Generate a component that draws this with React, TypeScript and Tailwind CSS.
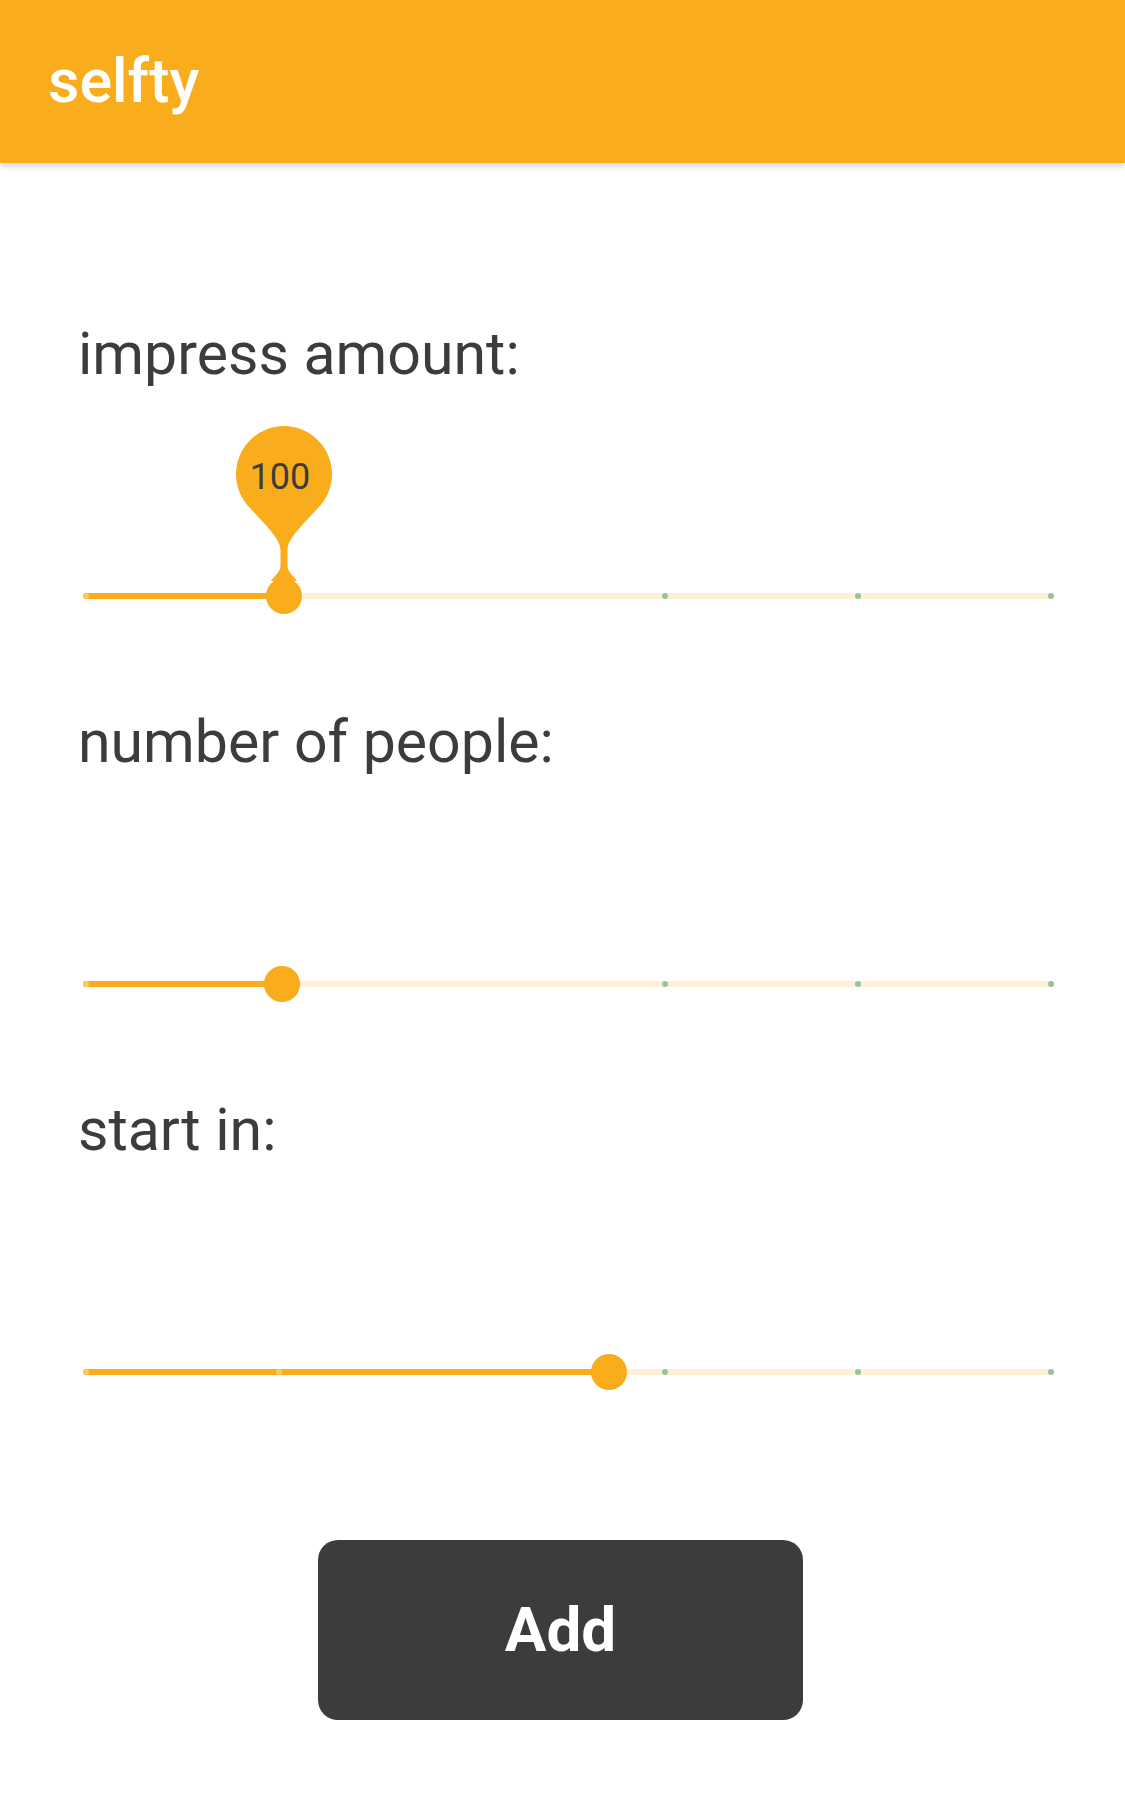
import React from "react";

const TICKS = [3, 196, 389, 582, 775, 968];

type SliderProps = { value: number; bubble?: string; hideTicks?: number[] };

function Slider({ value, bubble, hideTicks = [2] }: SliderProps) {
  return (
    <div className="relative h-[120px] ml-[5px] w-[971px] flex items-center">
      {/* inactive track */}
      <div className="relative h-[6px] w-full rounded-full bg-[#fdf0d6]">
        {/* active track */}
        <div
          className="absolute left-0 top-0 h-[6px] rounded-full bg-[#f9ad1d]"
          style={{ width: value }}
        />
        {TICKS.map((t, i) =>
          hideTicks.includes(i) ? null : (
            <div
              key={t}
              className={
                t < value
                  ? "absolute top-0 h-[6px] w-[6px] rounded-full bg-[#fcc75e]"
                  : "absolute top-0 h-[6px] w-[6px] rounded-full bg-[#94c4a0]"
              }
              style={{ left: t - 3 }}
            />
          )
        )}
      </div>
      {/* thumb */}
      <div
        className="absolute top-[42px] h-[36px] w-[36px] rounded-full bg-[#f9ad1d]"
        style={{ left: value - 18 }}
      />
      {bubble && (
        <div
          className="absolute top-[-112px] h-[190px] w-[110px]"
          style={{ left: value - 55 }}
        >
          <svg width="110" height="190" viewBox="-55 -170 110 190" className="absolute inset-0">
            <path
              d="M -3.5,-14 L -3.5,-44 C -3.5,-56 -20.6,-71 -34,-86 A 48 48 0 1 1 34,-86 C 20.6,-71 3.5,-56 3.5,-44 L 3.5,-28 C 3.5,-22 9,-19 13,-13 L -13,-13 C -9,-19 -3.5,-22 -3.5,-28 Z"
              fill="#f9ad1d"
            />
          </svg>
          <div className="absolute left-0 right-0 top-[35px] h-[36px] pr-[8px] flex items-center justify-center font-['Roboto',sans-serif] text-[36px] leading-none text-[#3c3c3c]">
            {bubble}
          </div>
        </div>
      )}
    </div>
  );
}

function Section({ label, children, first = false }: { label: string; children: React.ReactNode; first?: boolean }) {
  return (
    <div className={first ? "flex flex-col" : "flex flex-col mt-[57px]"}>
      <div className="h-[57px] font-['Roboto',sans-serif] text-[59px] leading-[57px] text-[#3c3c3c]">{label}</div>
      <div className="mt-[154px]">{children}</div>
    </div>
  );
}

export default function App() {
  return (
    <div className="min-h-[1800px] w-[1125px] bg-white font-['Roboto',sans-serif]">
      {/* Header */}
      <div className="relative z-10 h-[163px] bg-[#f9ad1d] flex items-center px-[48px] shadow-[0_3px_6px_rgba(0,0,0,0.18)]">
        <span className="text-[61px] leading-none font-medium text-white">selfty</span>
      </div>

      <div className="px-[78px] pt-[162px]">
        <Section label="impress amount:" first>
          <Slider value={201} bubble="100" />
        </Section>
        <Section label="number of people:">
          <Slider value={199} />
        </Section>
        <Section label="start in:">
          <Slider value={526} />
        </Section>
      </div>

      <div className="flex justify-center mt-[108px] pr-[4px]">
        <button className="h-[180px] w-[485px] rounded-[20px] bg-[#3c3c3c] text-white text-[62px] font-bold leading-none">
          Add
        </button>
      </div>
    </div>
  );
}
